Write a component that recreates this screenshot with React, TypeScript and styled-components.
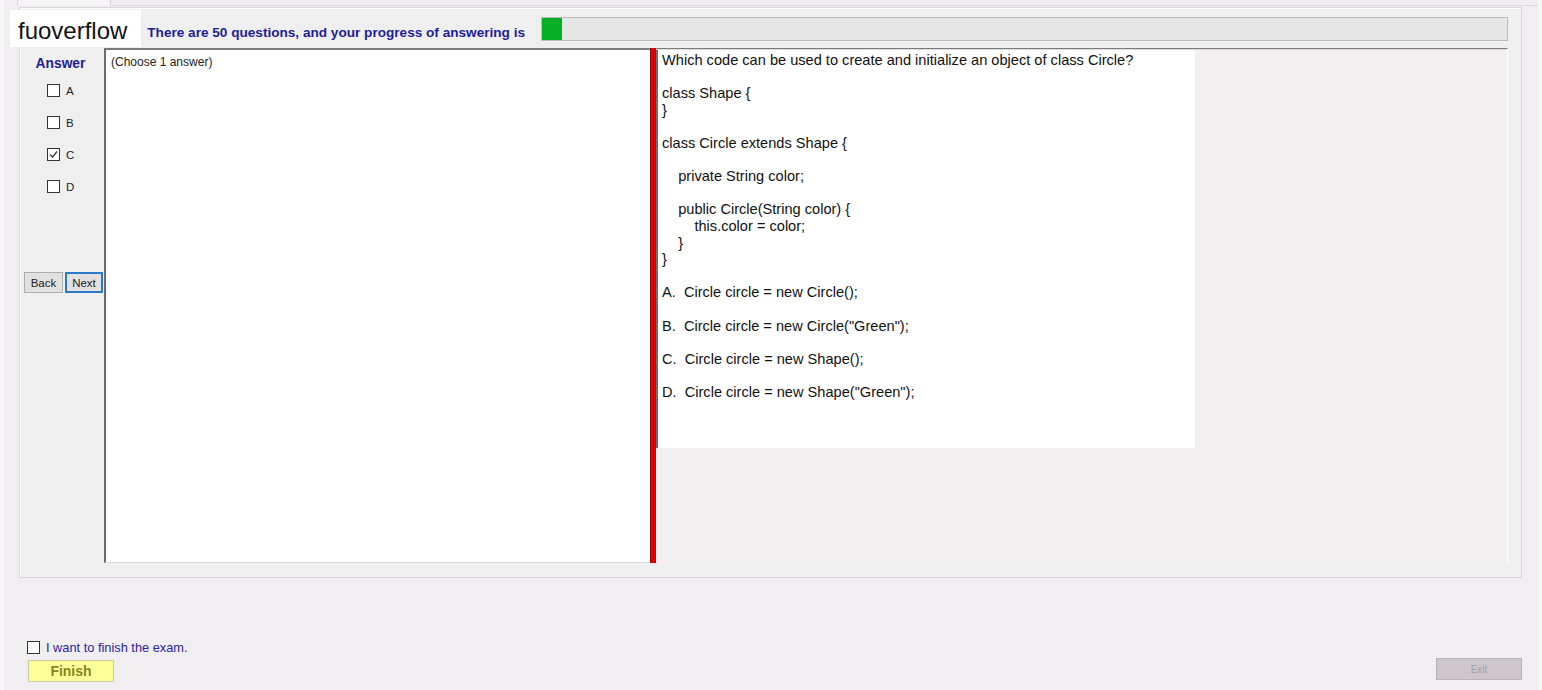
import styled, { createGlobalStyle } from "styled-components";

const GlobalStyle = createGlobalStyle`
  html, body {
    margin: 0;
    padding: 0;
    background: #f8f7f8;
    font-family: "Liberation Sans", Arial, sans-serif;
  }
`;

const Page = styled.div`
  position: relative;
  width: 1534px;
  height: 690px;
  margin-left: 4px;
  background: #f1eef1;
  display: flex;
  flex-direction: column;
`;

const TabStrip = styled.div`
  height: 7px;
  display: flex;
  align-items: flex-start;
`;

const Tab = styled.div`
  margin-left: 13px;
  width: 92px;
  height: 5px;
  background: #f6f5f6;
  border-left: 1px solid #d9d6d9;
  border-right: 1px solid #d9d6d9;
`;

const TabLine = styled.div`
  flex: 1;
  height: 5px;
  border-bottom: 1px solid #dcd9dc;
`;

const GroupBox = styled.div`
  margin-left: 15px;
  width: 1503px;
  height: 571px;
  border: 1px solid #d9d6d9;
  box-shadow: inset 1px 1px 0 #ffffff;
  background: #f0efef;
  padding: 9px 13px 0 4px;
  box-sizing: border-box;
  display: flex;
  flex-direction: column;
`;

const HeaderRow = styled.div`
  height: 24px;
  display: grid;
  grid-template-columns: 517px 1fr;
  align-items: center;
`;

const HeaderText = styled.div`
  justify-self: end;
  padding: 6px 16px 0 0;
  font-size: 13.6px;
  font-weight: bold;
  color: #1d1d9c;
  white-space: nowrap;
  overflow: hidden;
`;

const ProgressBar = styled.div`
  height: 22px;
  background: #e6e6e6;
  border: 1px solid #bcbcbc;
  display: flex;
`;

const ProgressFill = styled.div`
  background: #06b025;
  height: 100%;
`;

const ContentRow = styled.div`
  margin-top: 7px;
  height: 515px;
  display: grid;
  grid-template-columns: 80px 546px 6px 1fr;
`;

const AnswerPanel = styled.div`
  display: flex;
  flex-direction: column;
  padding-top: 7px;
`;

const AnswerTitle = styled.div`
  text-align: center;
  padding-right: 7px;
  font-size: 13.8px;
  font-weight: bold;
  color: #1d1d9c;
  height: 18px;
  line-height: 18px;
`;

const OptionList = styled.div`
  margin-top: 11px;
  display: flex;
  flex-direction: column;
  gap: 19px;
  padding-left: 23px;
`;

const OptionRow = styled.label`
  display: flex;
  align-items: center;
  gap: 6px;
  height: 13px;
  font-size: 11.5px;
  color: #222;
`;

const Box = styled.span`
  width: 11px;
  height: 11px;
  border: 1px solid #333;
  background: #fff;
  display: flex;
  align-items: center;
  justify-content: center;
`;

const NavButtons = styled.div`
  margin-top: auto;
  margin-bottom: 270px;
  display: flex;
  gap: 2px;
`;

const NavButton = styled.button<{ $focused?: boolean }>`
  height: 21px;
  width: ${(p) => (p.$focused ? "38px" : "39px")};
  padding: 0;
  background: #e1e1e1;
  border: ${(p) => (p.$focused ? "2px solid #2a78c9" : "1px solid #adadad")};
  font-family: "Liberation Sans", Arial, sans-serif;
  font-size: 11.5px;
  color: #222;
`;

const ChooseBox = styled.div`
  background: #fff;
  border-top: 2px solid #7c7c7c;
  border-left: 2px solid #6d6d6d;
  border-bottom: 1px solid #d8d8d8;
  padding: 5px 5px;
  font-size: 12px;
  color: #222;
`;

const Splitter = styled.div`
  background: #e00000;
  border-left: 1px solid #9c0c0c;
  border-right: 1px solid #a31010;
`;

const QuestionArea = styled.div`
  border-top: 1px solid #7c7c7c;
  border-right: 1px solid #ffffff;
  box-shadow: inset 0 1px 0 #dcdcdc;
  background: #f2eff0;
  padding-top: 1px;
`;

const QuestionBox = styled.div`
  width: 539px;
  height: 398px;
  background: #fff;
  border-left: 2px solid #6d6d6d;
  box-sizing: border-box;
  padding: 2px 0 0 4px;
  font-size: 14.6px;
  line-height: 16.6px;
  color: #111;
  white-space: pre;
`;

const Footer = styled.div`
  flex: 1;
  display: flex;
  justify-content: space-between;
  align-items: flex-end;
  padding: 0 16px 8px 23px;
`;

const FinishBlock = styled.div`
  display: flex;
  flex-direction: column;
  gap: 5px;
`;

const FinishCheck = styled.label`
  display: flex;
  align-items: center;
  gap: 6px;
  font-size: 12.8px;
  color: #2a24a0;
`;

const FinishButton = styled.button`
  margin-left: 1px;
  width: 86px;
  height: 22px;
  background: #ffff99;
  border: 1px solid #c9c9a6;
  font-family: "Liberation Sans", Arial, sans-serif;
  font-weight: bold;
  font-size: 14px;
  color: #86861a;
`;

const ExitButton = styled.button`
  width: 86px;
  height: 22px;
  margin-bottom: 2px;
  background: #cdc6cd;
  border: 1px solid #b9b3b9;
  font-family: "Liberation Sans", Arial, sans-serif;
  font-size: 10px;
  color: #a59ea5;
`;

const Watermark = styled.div`
  position: absolute;
  left: 6px;
  top: 10px;
  width: 131px;
  height: 37px;
  background: #fff;
  font-size: 24px;
  color: #111;
  padding: 4px 0 0 8px;
  box-sizing: border-box;
  line-height: 33px;
`;

function CheckBox({ checked }: { checked?: boolean }) {
  return (
    <Box>
      {checked && (
        <svg width="9" height="9" viewBox="0 0 9 9">
          <path d="M1 4.5 L3.5 7 L8 1.5" fill="none" stroke="#333" strokeWidth="1.2" />
        </svg>
      )}
    </Box>
  );
}

const options = ["A", "B", "C", "D"];

const question = `Which code can be used to create and initialize an object of class Circle?

class Shape {
}

class Circle extends Shape {

    private String color;

    public Circle(String color) {
        this.color = color;
    }
}

A.  Circle circle = new Circle();

B.  Circle circle = new Circle("Green");

C.  Circle circle = new Shape();

D.  Circle circle = new Shape("Green");`;

export default function App() {
  const progress = 20;
  return (
    <>
      <GlobalStyle />
      <Page>
        <TabStrip>
          <Tab />
          <TabLine />
        </TabStrip>
        <GroupBox>
          <HeaderRow>
            <HeaderText>There are 50 questions, and your progress of answering is</HeaderText>
            <ProgressBar>
              <ProgressFill style={{ width: progress }} />
            </ProgressBar>
          </HeaderRow>
          <ContentRow>
            <AnswerPanel>
              <AnswerTitle>Answer</AnswerTitle>
              <OptionList>
                {options.map((o) => (
                  <OptionRow key={o}>
                    <CheckBox checked={o === "C"} />
                    {o}
                  </OptionRow>
                ))}
              </OptionList>
              <NavButtons>
                <NavButton>Back</NavButton>
                <NavButton $focused>Next</NavButton>
              </NavButtons>
            </AnswerPanel>
            <ChooseBox>(Choose 1 answer)</ChooseBox>
            <Splitter />
            <QuestionArea>
              <QuestionBox>{question}</QuestionBox>
            </QuestionArea>
          </ContentRow>
        </GroupBox>
        <Footer>
          <FinishBlock>
            <FinishCheck>
              <CheckBox />
              I want to finish the exam.
            </FinishCheck>
            <FinishButton>Finish</FinishButton>
          </FinishBlock>
          <ExitButton disabled>Exit</ExitButton>
        </Footer>
        <Watermark>fuoverflow</Watermark>
      </Page>
    </>
  );
}
